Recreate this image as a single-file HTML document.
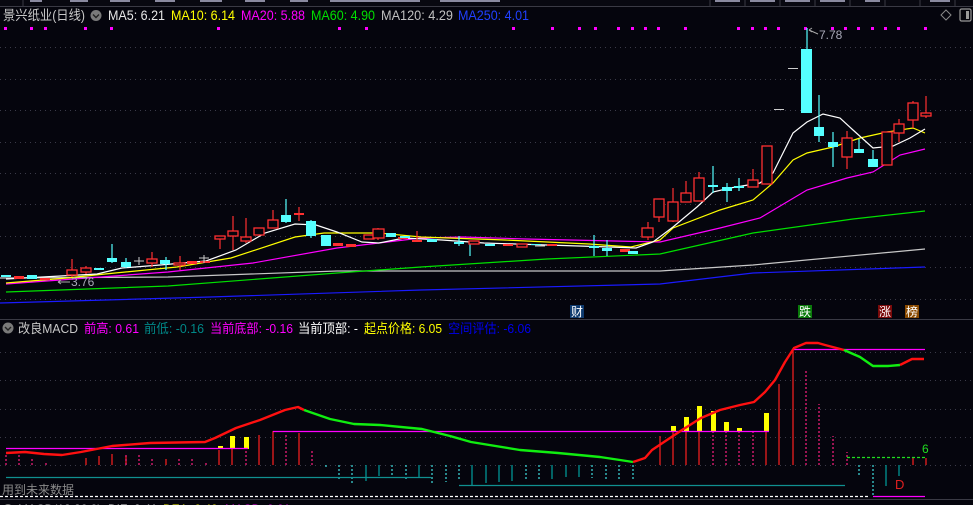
<!DOCTYPE html>
<html><head><meta charset="utf-8"><style>
html,body{margin:0;padding:0;background:#05050d;overflow:hidden}
svg{display:block}
text{font-family:"Liberation Sans","Noto Sans CJK SC",sans-serif}
</style></head><body>
<svg width="973" height="505" viewBox="0 0 973 505" xmlns="http://www.w3.org/2000/svg">
<rect width="973" height="505" fill="#05050d"/>
<!-- top strip -->
<rect x="0" y="0" width="973" height="6" fill="#080810"/>
<line x1="0" y1="6.5" x2="973" y2="6.5" stroke="#3a3a44"/>
<g fill="#8a8aa0"><rect x="30" y="0" width="12" height="2"/><rect x="70" y="0" width="18" height="2"/><rect x="110" y="0" width="20" height="2"/><rect x="155" y="0" width="20" height="2"/><rect x="200" y="0" width="22" height="2"/><rect x="245" y="0" width="20" height="2"/><rect x="290" y="0" width="18" height="2"/><rect x="330" y="0" width="90" height="2"/><rect x="440" y="0" width="60" height="2"/><rect x="715" y="0" width="25" height="2"/><rect x="750" y="0" width="25" height="2"/><rect x="785" y="0" width="25" height="2"/><rect x="820" y="0" width="25" height="2"/><rect x="865" y="0" width="15" height="2"/><rect x="930" y="0" width="20" height="2"/></g>
<g stroke="#3a3a44"><line x1="23" y1="0" x2="23" y2="6"/><line x1="710" y1="0" x2="710" y2="6"/><line x1="745" y1="0" x2="745" y2="6"/><line x1="780" y1="0" x2="780" y2="6"/><line x1="815" y1="0" x2="815" y2="6"/><line x1="850" y1="0" x2="850" y2="6"/><line x1="885" y1="0" x2="885" y2="6"/><line x1="920" y1="0" x2="920" y2="6"/><line x1="955" y1="0" x2="955" y2="6"/></g>

<!-- header -->
<text x="3" y="20" font-size="13.5" fill="#c8c8c8" textLength="82" lengthAdjust="spacingAndGlyphs">景兴纸业(日线)</text>
<circle cx="96" cy="15.5" r="5.5" fill="#7a7a7a"/><path d="M93 14.5 L96 17.5 L99 14.5" stroke="#222" stroke-width="1.4" fill="none"/>
<text x="108" y="20" font-size="13.5" fill="#e8e8e8" textLength="57" lengthAdjust="spacingAndGlyphs">MA5: 6.21</text>
<text x="171" y="20" font-size="13.5" fill="#ffff00" textLength="64" lengthAdjust="spacingAndGlyphs">MA10: 6.14</text>
<text x="241" y="20" font-size="13.5" fill="#ff00ff" textLength="64" lengthAdjust="spacingAndGlyphs">MA20: 5.88</text>
<text x="311" y="20" font-size="13.5" fill="#00e000" textLength="64" lengthAdjust="spacingAndGlyphs">MA60: 4.90</text>
<text x="381" y="20" font-size="13.5" fill="#c0c0c0" textLength="72" lengthAdjust="spacingAndGlyphs">MA120: 4.29</text>
<text x="458" y="20" font-size="13.5" fill="#2040ff" textLength="71" lengthAdjust="spacingAndGlyphs">MA250: 4.01</text>
<path d="M946 10 L951 15 L946 20 L941 15 Z" stroke="#888" fill="none"/>
<rect x="960" y="9" width="11" height="12" rx="1.5" stroke="#999" fill="none" stroke-width="1.2"/><rect x="966" y="11" width="3" height="8" fill="#999"/>

<!-- magenta dots -->
<g fill="#ff00ff">
<rect x="4" y="27" width="3" height="3"/><rect x="30" y="27" width="3" height="3"/><rect x="44" y="27" width="3" height="3"/><rect x="84" y="27" width="3" height="3"/><rect x="110" y="27" width="3" height="3"/><rect x="217" y="27" width="3" height="3"/><rect x="338" y="27" width="3" height="3"/><rect x="365" y="27" width="3" height="3"/><rect x="512" y="27" width="3" height="3"/><rect x="551" y="27" width="3" height="3"/><rect x="578" y="27" width="3" height="3"/><rect x="594" y="27" width="3" height="3"/>
<rect x="617" y="27" width="3" height="3"/><rect x="631" y="27" width="3" height="3"/><rect x="644" y="27" width="3" height="3"/><rect x="657" y="27" width="3" height="3"/><rect x="684" y="27" width="3" height="3"/><rect x="737" y="27" width="3" height="3"/><rect x="751" y="27" width="3" height="3"/><rect x="764" y="27" width="3" height="3"/><rect x="777" y="27" width="3" height="3"/><rect x="804" y="27" width="3" height="3"/><rect x="831" y="27" width="3" height="3"/><rect x="844" y="27" width="3" height="3"/><rect x="857" y="27" width="3" height="3"/><rect x="871" y="27" width="3" height="3"/><rect x="884" y="27" width="3" height="3"/><rect x="897" y="27" width="3" height="3"/><rect x="924" y="27" width="3" height="3"/>
</g>

<!-- grid main -->
<g stroke="#3a3a48" stroke-dasharray="1,4">
<line x1="0" y1="47.5" x2="973" y2="47.5"/><line x1="0" y1="79.5" x2="973" y2="79.5"/><line x1="0" y1="110.5" x2="973" y2="110.5"/><line x1="0" y1="142.5" x2="973" y2="142.5"/><line x1="0" y1="173.5" x2="973" y2="173.5"/><line x1="0" y1="204.5" x2="973" y2="204.5"/><line x1="0" y1="236.5" x2="973" y2="236.5"/><line x1="0" y1="267.5" x2="973" y2="267.5"/><line x1="0" y1="299.5" x2="973" y2="299.5"/>
</g>

<!-- MA lines -->
<g fill="none" stroke-width="1.2">
<polyline stroke="#1a1aff" points="0,303 210,297 421,290 660,284 753,273 925,267"/>
<polyline stroke="#c8c8c8" points="0,278 168,277 337,271 660,271 753,265 925,249"/>
<polyline stroke="#00e000" points="6,292 168,286 337,273 421,267 547,259 660,254 753,233 853,219 925,211"/>
<polyline stroke="#ff00ff" points="6,284 168,272 253,263 337,248 421,238 463,237 526,239 660,242 720,228 760,218 807,190 847,178 873,172 900,155 925,149"/>
<polyline stroke="#ffff00" points="6,283 67,278 105,274 177,267 231,258 295,237 324,233 379,233 421,237 505,240 589,244 631,247 660,240 673,228 720,210 753,200 773,183 793,160 807,153 833,147 860,138 887,132 913,128 925,133"/>
<polyline stroke="#ffffff" points="6,279 97,274 122,268 160,265 206,261 236,250 265,233 295,224 316,225 337,232 362,242 379,243 404,238 442,240 484,243 547,245 610,247 636,248 653,242 673,227 697,207 713,192 730,188 760,183 773,173 793,133 807,122 823,114 840,118 853,130 873,148 893,146 910,138 925,129"/>
</g>

<!-- candles: wicks -->
<g stroke-width="1.2">
<g stroke="#ff3030">
<line x1="72" y1="259" x2="72" y2="277"/><line x1="86" y1="266" x2="86" y2="274"/><line x1="152" y1="252" x2="152" y2="267"/><line x1="180" y1="256" x2="180" y2="270"/><line x1="220" y1="236" x2="220" y2="249"/><line x1="233" y1="216" x2="233" y2="250"/><line x1="246" y1="218" x2="246" y2="243"/><line x1="273" y1="210" x2="273" y2="228"/><line x1="299" y1="207" x2="299" y2="221"/><line x1="378" y1="228" x2="378" y2="240"/><line x1="417" y1="231" x2="417" y2="241"/><line x1="648" y1="222" x2="648" y2="240"/>
<line x1="659" y1="199" x2="659" y2="222"/><line x1="673" y1="188" x2="673" y2="222"/><line x1="686" y1="181" x2="686" y2="202"/><line x1="699" y1="172" x2="699" y2="201"/><line x1="753" y1="169" x2="753" y2="187"/><line x1="847" y1="131" x2="847" y2="169"/><line x1="899" y1="119" x2="899" y2="142"/><line x1="913" y1="101" x2="913" y2="128"/><line x1="926" y1="96" x2="926" y2="118"/>
</g>
<g stroke="#55ffff">
<line x1="112" y1="244" x2="112" y2="263"/><line x1="126" y1="258" x2="126" y2="268"/><line x1="166" y1="257" x2="166" y2="270"/><line x1="286" y1="199" x2="286" y2="223"/><line x1="311" y1="220" x2="311" y2="238"/><line x1="459" y1="236" x2="459" y2="246"/><line x1="470" y1="244" x2="470" y2="256"/><line x1="594" y1="235" x2="594" y2="256"/><line x1="607" y1="240" x2="607" y2="256"/><line x1="713" y1="166" x2="713" y2="193"/><line x1="727" y1="183" x2="727" y2="202"/><line x1="739" y1="178" x2="739" y2="191"/><line x1="807" y1="28" x2="807" y2="113"/><line x1="819" y1="95" x2="819" y2="142"/><line x1="833" y1="132" x2="833" y2="167"/><line x1="859" y1="139" x2="859" y2="153"/><line x1="873" y1="150" x2="873" y2="167"/>
</g>
</g>
<!-- candles: red hollow -->
<g stroke="#ff3030" stroke-width="1.3" fill="#05050d">
<rect x="67" y="270" width="10" height="5"/><rect x="81" y="268" width="10" height="4"/><rect x="147" y="259" width="10" height="4"/><rect x="174" y="263" width="11" height="2"/><rect x="215" y="236" width="10" height="3"/><rect x="228" y="231" width="10" height="5"/><rect x="241" y="237" width="10" height="4"/><rect x="254" y="228" width="10" height="7"/><rect x="268" y="220" width="10" height="8"/>
<rect x="364" y="235" width="10" height="4"/><rect x="373" y="229" width="11" height="9"/><rect x="469" y="241" width="10" height="3"/><rect x="517" y="244" width="10" height="3"/><rect x="642" y="228" width="11" height="9"/>
<rect x="654" y="199" width="10" height="18"/><rect x="668" y="202" width="10" height="19"/><rect x="681" y="193" width="10" height="9"/><rect x="694" y="178" width="10" height="23"/><rect x="748" y="180" width="10" height="7"/><rect x="762" y="146" width="10" height="38"/><rect x="842" y="138" width="10" height="19"/><rect x="882" y="132" width="10" height="33"/><rect x="894" y="124" width="10" height="9"/><rect x="908" y="103" width="10" height="17"/><rect x="921" y="113" width="10" height="3"/>
</g>
<!-- red solid small -->
<g fill="#ff3030">
<rect x="14" y="276" width="10" height="3"/><rect x="40" y="278" width="10" height="2"/><rect x="187" y="261" width="10" height="3"/><rect x="200" y="261" width="10" height="2"/><rect x="294" y="213" width="10" height="2"/><rect x="333" y="243" width="10" height="3"/><rect x="346" y="244" width="10" height="3"/><rect x="398" y="237" width="10" height="2"/><rect x="412" y="240" width="10" height="2"/><rect x="503" y="244" width="10" height="2"/><rect x="547" y="244" width="10" height="2"/><rect x="620" y="249" width="10" height="3"/>
</g>
<!-- cyan solid -->
<g fill="#55ffff">
<rect x="1" y="275" width="10" height="2"/><rect x="27" y="275" width="10" height="4"/><rect x="94" y="268" width="10" height="2"/><rect x="107" y="258" width="10" height="4"/><rect x="121" y="262" width="10" height="5"/><rect x="160" y="260" width="10" height="4"/><rect x="281" y="215" width="10" height="7"/><rect x="306" y="221" width="10" height="15"/><rect x="321" y="235" width="10" height="11"/>
<rect x="386" y="233" width="10" height="4"/><rect x="400" y="236" width="10" height="2"/><rect x="427" y="239" width="10" height="3"/><rect x="454" y="242" width="10" height="2"/><rect x="485" y="244" width="10" height="2"/><rect x="531" y="244" width="10" height="1"/><rect x="589" y="246" width="10" height="2"/><rect x="602" y="248" width="10" height="3"/><rect x="628" y="251" width="10" height="3"/>
<rect x="708" y="185" width="10" height="2"/><rect x="722" y="187" width="10" height="4"/><rect x="734" y="186" width="10" height="2"/><rect x="801" y="49" width="11" height="64"/><rect x="814" y="127" width="10" height="9"/><rect x="828" y="142" width="10" height="5"/><rect x="854" y="149" width="10" height="4"/><rect x="868" y="159" width="10" height="8"/>
</g>
<g stroke="#cccccc"><line x1="134" y1="261" x2="144" y2="261"/><line x1="139" y1="257" x2="139" y2="265"/><line x1="199" y1="258" x2="209" y2="258"/><line x1="204" y1="255" x2="204" y2="263"/><line x1="535" y1="246" x2="545" y2="246"/><line x1="774" y1="109.5" x2="784" y2="109.5"/><line x1="788" y1="68.5" x2="798" y2="68.5"/></g>
<!-- price labels -->
<path d="M809 30 L818 34" stroke="#aaa" fill="none"/><path d="M809 30 l3 -2 M809 30 l3 2" stroke="#aaa"/>
<text x="819" y="39" font-size="12" fill="#a8a8b8">7.78</text>
<path d="M58 282 L70 282" stroke="#aaa"/><path d="M58 282 l3 -2 M58 282 l3 2" stroke="#aaa"/>
<text x="71" y="286" font-size="12" fill="#a8a8b8">3.76</text>
<!-- event labels -->
<rect x="570" y="305" width="14" height="13" fill="#0e3a6e"/><text x="571" y="316" font-size="12" fill="#ffffff">财</text>
<rect x="798" y="305" width="14" height="13" fill="#0a7a0a"/><text x="799" y="316" font-size="12" fill="#ffffff">跌</text>
<rect x="878" y="305" width="14" height="13" fill="#7a0a0a"/><text x="879" y="316" font-size="12" fill="#ffffff">涨</text>
<rect x="905" y="305" width="14" height="13" fill="#8a4a00"/><text x="906" y="316" font-size="12" fill="#ffffff">榜</text>

<!-- panel divider -->
<line x1="0" y1="319.5" x2="973" y2="319.5" stroke="#3a3a44"/>
<!-- MACD header -->
<circle cx="8" cy="328" r="5.5" fill="#7a7a7a"/><path d="M5 327 L8 330 L11 327" stroke="#222" stroke-width="1.4" fill="none"/>
<text x="18" y="333" font-size="13" fill="#c8c8c8" textLength="60" lengthAdjust="spacingAndGlyphs">改良MACD</text>
<text x="84" y="333" font-size="13" fill="#ff00ff" textLength="55" lengthAdjust="spacingAndGlyphs">前高: 0.61</text>
<text x="144" y="333" font-size="13" fill="#008888" textLength="60" lengthAdjust="spacingAndGlyphs">前低: -0.16</text>
<text x="210" y="333" font-size="13" fill="#ff00ff" textLength="83" lengthAdjust="spacingAndGlyphs">当前底部: -0.16</text>
<text x="298" y="333" font-size="13" fill="#ffffff" textLength="60" lengthAdjust="spacingAndGlyphs">当前顶部: -</text>
<text x="364" y="333" font-size="13" fill="#ffff00" textLength="78" lengthAdjust="spacingAndGlyphs">起点价格: 6.05</text>
<text x="448" y="333" font-size="13" fill="#0000ee" textLength="83" lengthAdjust="spacingAndGlyphs">空间评估: -6.06</text>

<g stroke="#3a3a48" stroke-dasharray="1,4">
<line x1="0" y1="352.5" x2="973" y2="352.5"/><line x1="0" y1="380.5" x2="973" y2="380.5"/><line x1="0" y1="409.5" x2="973" y2="409.5"/><line x1="0" y1="437.5" x2="973" y2="437.5"/><line x1="0" y1="465.5" x2="973" y2="465.5"/>
</g>

<!-- red bars above zero -->
<g stroke="#ff2020" stroke-width="1.2">
<line x1="86" y1="465" x2="86" y2="458"/><line x1="99" y1="465" x2="99" y2="456"/><line x1="112" y1="465" x2="112" y2="454"/><line x1="126" y1="465" x2="126" y2="456"/><line x1="166" y1="465" x2="166" y2="459"/><line x1="219" y1="465" x2="219" y2="450"/><line x1="232" y1="465" x2="232" y2="437"/><line x1="259" y1="465" x2="259" y2="435"/><line x1="273" y1="465" x2="273" y2="431"/><line x1="299" y1="465" x2="299" y2="433"/>
<line x1="660" y1="465" x2="660" y2="436"/><line x1="673" y1="465" x2="673" y2="430"/><line x1="686" y1="465" x2="686" y2="422"/><line x1="699" y1="465" x2="699" y2="410"/><line x1="766" y1="465" x2="766" y2="413"/><line x1="779" y1="465" x2="779" y2="384"/><line x1="793" y1="465" x2="793" y2="349"/><line x1="913" y1="465" x2="913" y2="458"/><line x1="926" y1="465" x2="926" y2="458"/>
</g>
<g stroke="#ff2080" stroke-width="1.2" stroke-dasharray="2,2">
<line x1="6" y1="465" x2="6" y2="455"/><line x1="19" y1="465" x2="19" y2="453"/><line x1="32" y1="465" x2="32" y2="457"/><line x1="46" y1="465" x2="46" y2="461"/><line x1="126" y1="465" x2="126" y2="455"/><line x1="139" y1="465" x2="139" y2="455"/><line x1="152" y1="465" x2="152" y2="457"/><line x1="179" y1="465" x2="179" y2="457"/><line x1="192" y1="465" x2="192" y2="458"/><line x1="206" y1="465" x2="206" y2="461"/><line x1="246" y1="465" x2="246" y2="449"/><line x1="286" y1="465" x2="286" y2="433"/><line x1="312" y1="465" x2="312" y2="450"/>
<line x1="713" y1="465" x2="713" y2="432"/><line x1="726" y1="465" x2="726" y2="432"/><line x1="739" y1="465" x2="739" y2="432"/><line x1="753" y1="465" x2="753" y2="432"/><line x1="806" y1="465" x2="806" y2="370"/><line x1="819" y1="465" x2="819" y2="404"/><line x1="833" y1="465" x2="833" y2="436"/><line x1="847" y1="465" x2="847" y2="452"/>
</g>
<!-- teal bars below -->
<g stroke="#00a0a0" stroke-width="1.2">
<line x1="366" y1="465" x2="366" y2="481"/><line x1="379" y1="465" x2="379" y2="476"/><line x1="419" y1="465" x2="419" y2="477"/><line x1="472" y1="465" x2="472" y2="486"/><line x1="486" y1="465" x2="486" y2="483"/><line x1="499" y1="465" x2="499" y2="482"/><line x1="512" y1="465" x2="512" y2="481"/><line x1="552" y1="465" x2="552" y2="479"/><line x1="566" y1="465" x2="566" y2="477"/><line x1="579" y1="465" x2="579" y2="477"/><line x1="886" y1="465" x2="886" y2="486"/><line x1="899" y1="465" x2="899" y2="476"/>
</g>
<g stroke="#40e0e0" stroke-width="1.2" stroke-dasharray="2,2">
<line x1="326" y1="465" x2="326" y2="469"/><line x1="339" y1="465" x2="339" y2="479"/><line x1="352" y1="465" x2="352" y2="483"/><line x1="392" y1="465" x2="392" y2="476"/><line x1="406" y1="465" x2="406" y2="479"/><line x1="432" y1="465" x2="432" y2="483"/><line x1="446" y1="465" x2="446" y2="482"/><line x1="459" y1="465" x2="459" y2="481"/><line x1="526" y1="465" x2="526" y2="481"/><line x1="539" y1="465" x2="539" y2="481"/><line x1="592" y1="465" x2="592" y2="478"/><line x1="606" y1="465" x2="606" y2="479"/><line x1="619" y1="465" x2="619" y2="479"/><line x1="633" y1="465" x2="633" y2="479"/><line x1="859" y1="465" x2="859" y2="475"/><line x1="873" y1="465" x2="873" y2="496"/>
</g>
<!-- yellow bars -->
<g fill="#ffff00">
<rect x="218" y="446" width="5" height="3"/><rect x="230" y="436" width="5" height="13"/><rect x="244" y="437" width="5" height="12"/>
<rect x="671" y="426" width="5" height="6"/><rect x="684" y="417" width="5" height="15"/><rect x="697" y="406" width="5" height="26"/><rect x="711" y="411" width="5" height="21"/><rect x="724" y="422" width="5" height="10"/><rect x="737" y="428" width="5" height="4"/><rect x="751" y="431" width="5" height="1"/><rect x="764" y="413" width="5" height="19"/>
</g>
<!-- horizontal level lines -->
<g stroke-width="1.2" fill="none">
<line x1="6" y1="448.5" x2="248" y2="448.5" stroke="#ff00ff"/>
<line x1="273" y1="431.5" x2="769" y2="431.5" stroke="#ff00ff"/>
<line x1="794" y1="349.5" x2="925" y2="349.5" stroke="#ff00ff"/>
<line x1="873" y1="496.5" x2="925" y2="496.5" stroke="#ff00ff"/>
<line x1="6" y1="477.5" x2="431" y2="477.5" stroke="#109090"/>
<line x1="459" y1="485.5" x2="845" y2="485.5" stroke="#109090"/>
<line x1="847" y1="457.5" x2="926" y2="457.5" stroke="#20dd20" stroke-dasharray="3,2"/>
<line x1="0" y1="496.5" x2="870" y2="496.5" stroke="#ffffff" stroke-dasharray="3,2"/>
</g>
<text x="922" y="453" font-size="12" fill="#20dd20">6</text>
<text x="895" y="489" font-size="13" fill="#e02020">D</text>
<!-- MACD curve -->
<g fill="none" stroke-width="2.4" stroke-linejoin="round">
<polyline stroke="#ff1010" points="6,453 25,452 44,454 62,455 81,452 112,446 150,443 205,442 215,438 236,428 260,420 285,410 298,407 304,410"/>
<polyline stroke="#10ee10" points="304,410 330,419 354,424 380,425 422,429 450,436 471,442 520,450 558,453 600,457 620,460 633,462"/>
<polyline stroke="#ff1010" points="633,462 645,458 652,450 664,442 682,430 701,418 720,410 740,405 754,402 765,392 775,380 785,362 794,348 806,343 818,343 825,345 844,350"/>
<polyline stroke="#10ee10" points="844,350 860,357 873,366 888,366 900,365"/>
<polyline stroke="#ff1010" points="900,365 912,359 924,359"/>
</g>
<text x="2" y="494" font-size="12" fill="#8a8a8a">用到未来数据</text>

<!-- bottom strip -->
<line x1="0" y1="499.5" x2="973" y2="499.5" stroke="#3a3a44"/>
<circle cx="8" cy="509" r="5" fill="#7a7a7a"/>
<text x="18" y="513" font-size="12" fill="#c8c8c8">MACD(12,26,9)</text>
<text x="108" y="513" font-size="12" fill="#e8e8e8">DIF: 0.41</text>
<text x="163" y="513" font-size="12" fill="#ffff00">DEA: 0.40</text>
<text x="225" y="513" font-size="12" fill="#ff00ff">MACD: 0.01</text>
</svg>
</body></html>
